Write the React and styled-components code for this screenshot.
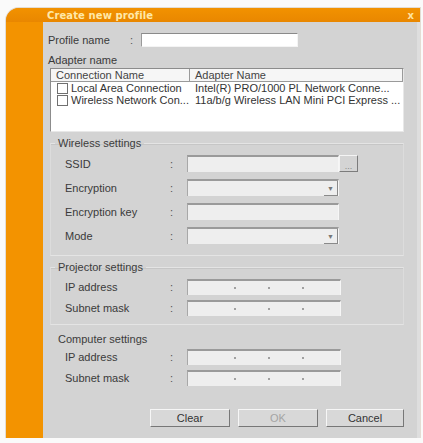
import React from 'react';
import styled, { createGlobalStyle } from 'styled-components';

const GlobalStyle = createGlobalStyle`
  html, body {
    margin: 0;
    padding: 0;
    background: #fafafa;
  }
  body {
    font-family: "Liberation Sans", Tahoma, sans-serif;
    font-size: 11px;
    color: #333;
  }
`;

// Window frame
const Window = styled.div`
  margin: 8px 0 0 6px;
  width: 414px;
  height: 430px;
  background: #f18d00;
  border-radius: 13px 0 0 0;
  box-shadow: 0 0 0 1px rgba(120, 90, 40, 0.18);
  display: flex;
  flex-direction: column;
`;

const TitleBar = styled.div`
  height: 14px;
  display: flex;
  align-items: center;
  justify-content: space-between;
  padding: 0 6px 0 41px;
  background: linear-gradient(#f29200, #e98700);
  border-radius: 13px 0 0 0;
`;

const Title = styled.span`
  font-family: "DejaVu Sans", Verdana, sans-serif;
  font-weight: bold;
  font-size: 10px;
  color: #ffe8a8;
  letter-spacing: 0.1px;
`;

const Close = styled.span`
  font-family: "DejaVu Sans", Verdana, sans-serif;
  font-weight: bold;
  font-size: 10px;
  color: #ffe3a0;
`;

const Body = styled.div`
  flex: 1;
  display: flex;
`;

const Strip = styled.div`
  width: 37px;
  background: #f39300;
`;

const Content = styled.div`
  flex: 1;
  background: #d3d3d3;
  border-right: 3px solid #dedede;
  padding: 11px 13px 0 5px;
  display: flex;
  flex-direction: column;
`;

// Top rows
const ProfileRow = styled.div`
  display: flex;
  align-items: center;
  height: 14px;
`;

const Label = styled.span`
  width: ${p => p.$w || 82}px;
  color: #3a3a3a;
  white-space: nowrap;
`;

const Colon = styled.span`
  width: ${p => p.$w || 11}px;
  color: #555;
`;

const TextInput = styled.div`
  width: 155px;
  height: 12px;
  background: #fff;
  border-top: 1px solid #8a8a8a;
  border-left: 1px solid #9a9a9a;
  border-bottom: 1px solid #f4f4f4;
  border-right: 1px solid #f4f4f4;
`;

const SectionTitle = styled.div`
  margin-top: 7px;
  line-height: 12px;
  color: #3a3a3a;
`;

// Adapter table
const Table = styled.div`
  margin: 2px 0 0 2px;
  height: 64px;
  box-sizing: border-box;
  background: #fff;
  border-top: 1px solid #8c8c8c;
  border-left: 1px solid #8c8c8c;
  border-right: 1px solid #e8e8e8;
  border-bottom: 1px solid #e8e8e8;
`;

const TableRow = styled.div`
  display: grid;
  grid-template-columns: 139px 1fr;
  height: ${p => (p.$head ? 13 : 12)}px;
  align-items: center;
  white-space: nowrap;
  overflow: hidden;
`;

const HeadCell = styled.div`
  height: 12px;
  line-height: 12px;
  padding-left: 5px;
  background: #f6f6f6;
  border-right: 1px solid #9a9a9a;
  border-bottom: 1px solid #9a9a9a;
  color: #444;
`;

const Cell = styled.div`
  display: flex;
  align-items: center;
  gap: 3px;
  padding-left: ${p => p.$pad || 5}px;
  color: #333;
  overflow: hidden;
`;

const Check = styled.span`
  width: 9px;
  height: 9px;
  border: 1px solid #707070;
  background: #fff;
  flex: none;
`;

// Group boxes
const Group = styled.fieldset`
  margin: ${p => p.$mt}px 0 0 2px;
  padding: ${p => p.$pt}px 0 ${p => p.$pb}px 14px;
  border: 1px solid ${p => (p.$plain ? 'transparent' : '#e4e4e4')};
  border-left-color: ${p => (p.$plain ? 'transparent' : '#dcdcdc')};
  border-right-color: ${p => (p.$plain ? 'transparent' : '#dcdcdc')};
  box-shadow: ${p => (p.$plain ? 'none' : 'inset 0 1px 0 #c6c6c6')};
  display: flex;
  flex-direction: column;
  gap: ${p => p.$gap}px;
`;

const Legend = styled.legend`
  margin-left: -10px;
  padding: 0 3px;
  line-height: 12px;
  color: #3c3c3c;
`;

const FieldRow = styled.div`
  display: flex;
  align-items: center;
  height: ${p => p.$h}px;
`;

const Field = styled.div`
  width: 150px;
  height: ${p => p.$h - 2}px;
  background: #eeeeee;
  border-top: 2px solid #9a9a9a;
  border-left: 1px solid #a8a8a8;
  border-right: 1px solid #f6f6f6;
  border-bottom: 0;
  display: flex;
  align-items: stretch;
  justify-content: flex-end;
`;

const DropButton = styled.div`
  width: 13px;
  border-right: 1px solid #8a8a8a;
  border-bottom: 1px solid #8a8a8a;
  display: flex;
  align-items: center;
  justify-content: center;
  color: #777;
  font-size: 7px;
`;

const BrowseButton = styled.div`
  width: 17px;
  height: 15px;
  background: #d4d4d4;
  border-top: 1px solid #f4f4f4;
  border-left: 1px solid #f4f4f4;
  border-right: 1px solid #7c7c7c;
  border-bottom: 1px solid #7c7c7c;
  display: flex;
  align-items: flex-end;
  justify-content: center;
  color: #888;
  font-size: 9px;
  line-height: 10px;
`;

const IpField = styled(Field)`
  justify-content: space-around;
  align-items: center;
  padding: 0 20px 0 30px;
  box-sizing: content-box;
  width: 102px;
`;

const Dot = styled.span`
  width: 2px;
  height: 2px;
  background: #a0a0a0;
`;

// Buttons
const ButtonBar = styled.div`
  margin-top: 22px;
  display: flex;
  justify-content: flex-end;
  gap: 8px;
`;

const Button = styled.div`
  width: ${p => p.$w}px;
  height: 16px;
  background: #d8d8d8;
  border-top: 1px solid #f6f6f6;
  border-left: 1px solid #f6f6f6;
  border-right: 1px solid #777;
  border-bottom: 1px solid #777;
  display: flex;
  align-items: center;
  justify-content: center;
  color: ${p => (p.$disabled ? '#a4a4a4' : '#333')};
`;

const IpRow = ({ label, h }) => (
  <FieldRow $h={h}>
    <Label $w={105}>{label}</Label>
    <Colon $w={17}>:</Colon>
    <IpField $h={h}>
      <Dot />
      <Dot />
      <Dot />
    </IpField>
  </FieldRow>
);

const App = () => (
  <>
    <GlobalStyle />
    <Window>
      <TitleBar>
        <Title>Create new profile</Title>
        <Close>x</Close>
      </TitleBar>
      <Body>
        <Strip />
        <Content>
          <ProfileRow>
            <Label>Profile name</Label>
            <Colon>:</Colon>
            <TextInput />
          </ProfileRow>

          <SectionTitle>Adapter name</SectionTitle>
          <Table>
            <TableRow $head>
              <HeadCell>Connection Name</HeadCell>
              <HeadCell>Adapter Name</HeadCell>
            </TableRow>
            <TableRow>
              <Cell $pad={6}><Check />Local Area Connection</Cell>
              <Cell>Intel(R) PRO/1000 PL Network Conne...</Cell>
            </TableRow>
            <TableRow>
              <Cell $pad={6}><Check />Wireless Network Con...</Cell>
              <Cell>11a/b/g Wireless LAN Mini PCI Express ...</Cell>
            </TableRow>
          </Table>

          <Group $mt={5} $pt={6} $pb={11} $gap={7}>
            <Legend>Wireless settings</Legend>
            <FieldRow $h={17}>
              <Label $w={105}>SSID</Label>
              <Colon $w={17}>:</Colon>
              <Field $h={17} />
              <BrowseButton>...</BrowseButton>
            </FieldRow>
            <FieldRow $h={17}>
              <Label $w={105}>Encryption</Label>
              <Colon $w={17}>:</Colon>
              <Field $h={17}><DropButton>▼</DropButton></Field>
            </FieldRow>
            <FieldRow $h={17}>
              <Label $w={105}>Encryption key</Label>
              <Colon $w={17}>:</Colon>
              <Field $h={17} />
            </FieldRow>
            <FieldRow $h={17}>
              <Label $w={105}>Mode</Label>
              <Colon $w={17}>:</Colon>
              <Field $h={17}><DropButton>▼</DropButton></Field>
            </FieldRow>
          </Group>

          <Group $mt={5} $pt={6} $pb={8} $gap={5}>
            <Legend>Projector settings</Legend>
            <IpRow label="IP address" h={16} />
            <IpRow label="Subnet mask" h={16} />
          </Group>

          <Group $plain $mt={8} $pt={4} $pb={0} $gap={5}>
            <Legend>Computer settings</Legend>
            <IpRow label="IP address" h={16} />
            <IpRow label="Subnet mask" h={16} />
          </Group>

          <ButtonBar>
            <Button $w={78}>Clear</Button>
            <Button $w={78} $disabled>OK</Button>
            <Button $w={76}>Cancel</Button>
          </ButtonBar>
        </Content>
      </Body>
    </Window>
  </>
);

export default App;
